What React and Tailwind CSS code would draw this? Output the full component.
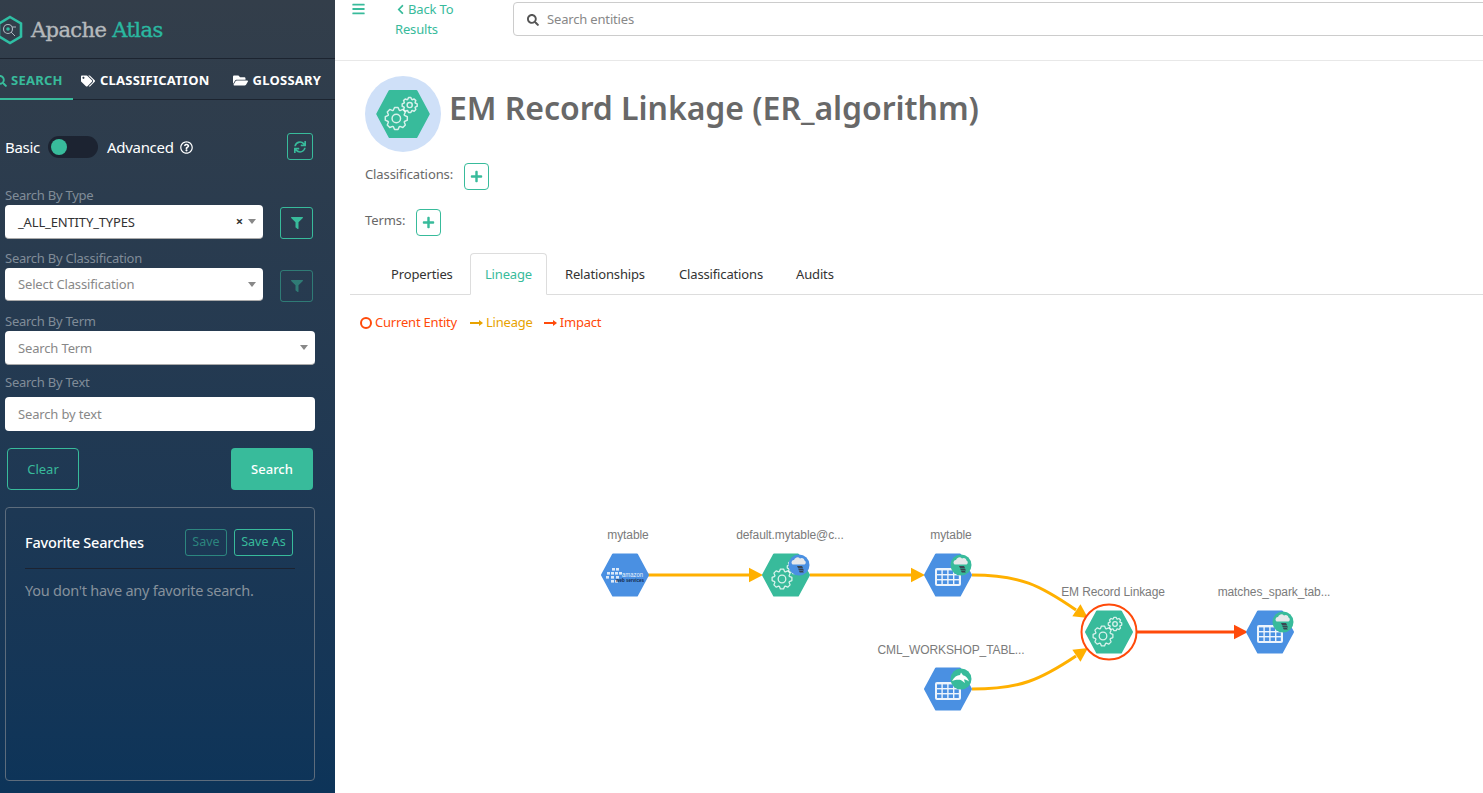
import { FaSearch, FaTags, FaFolderOpen, FaSync, FaFilter, FaPlus, FaChevronLeft, FaBars, FaRegQuestionCircle } from 'react-icons/fa';

// gear outline used inside the process nodes
function gearPath(cx, cy, r, teeth = 8) {
  const pts = [];
  for (let i = 0; i < teeth; i++) {
    const a = (i / teeth) * Math.PI * 2;
    const w = Math.PI / teeth;
    const out = r;
    const inner = r * 0.78;
    pts.push([a - w * 0.9, inner], [a - w * 0.4, out], [a + w * 0.4, out], [a + w * 0.9, inner]);
  }
  return 'M' + pts.map(([a, l]) => `${(cx + Math.cos(a) * l).toFixed(2)} ${(cy + Math.sin(a) * l).toFixed(2)}`).join('L') + 'Z';
}

function hexPoints(cx, cy, w = 23, h = 20.5) {
  const s = w * 0.52;
  return `${cx - w},${cy} ${cx - s},${cy - h} ${cx + s},${cy - h} ${cx + w},${cy} ${cx + s},${cy + h} ${cx - s},${cy + h}`;
}

function Gears({ cx, cy, stroke = 1.3 }) {
  const bx = cx - 6;
  const by = cy + 4;
  const sx = cx + 6;
  const sy = cy - 8;
  return (
    <g fill="none" stroke="#fff" strokeOpacity="0.8" strokeWidth={stroke} strokeLinejoin="round">
      <path d={gearPath(bx, by, 10)} />
      <circle cx={bx} cy={by} r="3.8" />
      <path d={gearPath(sx, sy, 6.8)} />
      <circle cx={sx} cy={sy} r="2.3" />
    </g>
  );
}

function TableIcon({ cx, cy }) {
  const x = cx - 13;
  const y = cy - 8;
  return (
    <g>
      <rect x={x} y={y} width="26" height="18" rx="2" fill="#fff" fillOpacity="0.9" />
      {[0, 1, 2].map((r) =>
        [0, 1, 2, 3].map((c) => (
          <rect key={`${r}-${c}`} x={x + 2 + c * 5.8} y={y + 2.4 + r * 5} width="4.4" height="3.6" fill="#4a90e2" />
        ))
      )}
    </g>
  );
}

function CloudBadge({ cx, cy, fill }) {
  return (
    <g>
      <circle cx={cx} cy={cy} r="10.5" fill={fill} />
      <path
        d={`M${cx - 7} ${cy - 1}a2.5 2.5 0 0 1 2-4a3.5 3.5 0 0 1 6-1.5a3 3 0 0 1 4.5 2a2.2 2.2 0 0 1 0 4h-11a2 2 0 0 1-1.5-.5z`}
        fill="#e6e8ea"
      />
      <path d={`M${cx - 2} ${cy + 1}h5l1 2h-5zM${cx - 1} ${cy + 3.5}h5l1 2h-5zM${cx} ${cy + 6}h4l.8 1.6h-4z`} fill="#3b4652" />
    </g>
  );
}

function WhaleBadge({ cx, cy }) {
  return (
    <g>
      <circle cx={cx} cy={cy} r="10.5" fill="#38bb9b" />
      <path
        d={`M${cx - 9} ${cy + 2}c2-4 5-6 8-6l1-2.5l2 2.8c3 .8 5 3 6 6.2c-2-1.4-3.6-2-5-2l1 3.5c-2-1.5-3.4-2.8-5-3.2c-3-.4-5 0-8 1.2z`}
        fill="#fff"
      />
    </g>
  );
}

function AwsMark({ cx, cy }) {
  const cubes = [[-13, -7], [-9, -7], [-18, -3], [-14, -3], [-10, -3], [-6, -3], [-19, 1], [-14, 1], [-9, 1], [-14, 5], [-10, 5]];
  return (
    <g>
      {cubes.map(([dx, dy], i) => (
        <rect key={i} x={cx + dx} y={cy + dy} width="3" height="2.6" fill="#fff" fillOpacity="0.8" />
      ))}
      <text x={cx - 3} y={cy + 1.5} fontSize="7.5" textLength="21" lengthAdjust="spacingAndGlyphs" fill="#fff" fillOpacity="0.9" fontFamily="Liberation Sans, sans-serif">amazon</text>
      <text x={cx - 9} y={cy + 7} fontSize="5" fontWeight="700" textLength="28" lengthAdjust="spacingAndGlyphs" fill="#13294b" fontFamily="Liberation Sans, sans-serif">web services</text>
    </g>
  );
}

function NodeLabel({ x, y, children }) {
  return (
    <text x={x} y={y} textAnchor="middle" fontSize="12" letterSpacing="-0.1" fill="#7b7b7b" fontFamily="Liberation Sans, sans-serif">
      {children}
    </text>
  );
}

function Arrow({ x, y, angle, color, size = 14 }) {
  return (
    <polygon
      points={`0,0 ${-size},${-size * 0.52} ${-size},${size * 0.52}`}
      fill={color}
      transform={`translate(${x} ${y}) rotate(${angle})`}
    />
  );
}

function LineageGraph() {
  const yellow = '#ffb000';
  const red = '#ff4a0a';
  return (
    <svg viewBox="335 335 1148 458" className="block w-[1148px] h-[458px]">
      {/* edges */}
      <g fill="none" stroke={yellow} strokeWidth="3">
        <path d="M648 575H752" />
        <path d="M810 575H914" />
        <path d="M972 575C1020 575 1040 585 1076 610" />
        <path d="M972 689C1020 689 1040 680 1076 656" />
      </g>
      <Arrow x={763} y={575} angle={0} color={yellow} />
      <Arrow x={925} y={575} angle={0} color={yellow} />
      <Arrow x={1088} y={618} angle={34} color={yellow} />
      <Arrow x={1088} y={648} angle={-34} color={yellow} />
      <path d="M1137 632H1238" stroke={red} strokeWidth="3" fill="none" />
      <Arrow x={1248} y={632} angle={0} color={red} />

      {/* nodes */}
      <polygon points={hexPoints(625, 575)} fill="#4a90e2" stroke="#4a90e2" strokeWidth="2" strokeLinejoin="round" />
      <AwsMark cx={625} cy={575} />

      <polygon points={hexPoints(786, 575)} fill="#38bb9b" stroke="#38bb9b" strokeWidth="2" strokeLinejoin="round" />
      <Gears cx={788} cy={575} />
      <CloudBadge cx={799} cy={565} fill="#4a90e2" />

      <polygon points={hexPoints(948, 575)} fill="#4a90e2" stroke="#4a90e2" strokeWidth="2" strokeLinejoin="round" />
      <TableIcon cx={948} cy={576} />
      <CloudBadge cx={961} cy={565} fill="#38bb9b" />

      <polygon points={hexPoints(948, 689)} fill="#4a90e2" stroke="#4a90e2" strokeWidth="2" strokeLinejoin="round" />
      <TableIcon cx={948} cy={690} />
      <WhaleBadge cx={961} cy={679} />

      <circle cx="1109" cy="632" r="27.5" fill="#fff" stroke={red} strokeWidth="2" />
      <polygon points={hexPoints(1109, 632)} fill="#38bb9b" stroke="#38bb9b" strokeWidth="2" strokeLinejoin="round" />
      <Gears cx={1109} cy={632} />

      <polygon points={hexPoints(1270, 632)} fill="#4a90e2" stroke="#4a90e2" strokeWidth="2" strokeLinejoin="round" />
      <TableIcon cx={1270} cy={633} />
      <CloudBadge cx={1283} cy={622} fill="#38bb9b" />

      <NodeLabel x={628} y={539}>mytable</NodeLabel>
      <NodeLabel x={790} y={539}>default.mytable@c...</NodeLabel>
      <NodeLabel x={951} y={539}>mytable</NodeLabel>
      <NodeLabel x={1113} y={596}>EM Record Linkage</NodeLabel>
      <NodeLabel x={1274} y={596}>matches_spark_tab...</NodeLabel>
      <NodeLabel x={951} y={654}>CML_WORKSHOP_TABL...</NodeLabel>
    </svg>
  );
}

function Caret() {
  return <span className="inline-block w-0 h-0 border-x-[4px] border-x-transparent border-t-[5px] border-t-[#888]" />;
}

function LegendArrow({ color }) {
  return (
    <svg viewBox="0 0 13 8" className="w-[13px] h-[8px] mr-[3px]">
      <path d="M0 4H10" stroke={color} strokeWidth="2" />
      <path d="M9 1L13 4L9 7Z" fill={color} />
    </svg>
  );
}

function Sidebar() {
  const label = 'h-[20px] text-[13px] leading-[20px] tracking-[-0.25px] text-[#808c98]';
  const field = 'rounded-[4px] bg-white flex items-center pl-[13px] pr-[7px] text-[13px] tracking-[-0.15px]';
  return (
    <aside className="w-[335px] h-full shrink-0 bg-linear-to-b from-[#333e4a] to-[#0d3459] text-white overflow-hidden">
      <div className="h-[59px] flex items-center border-b border-[#1c2430] pt-[2px]">
        <svg viewBox="0 0 28 30" className="w-[28px] h-[30px] -ml-[4px] shrink-0">
          <polygon points="14,2 25,8.5 25,21.5 14,28 3,21.5 3,8.5" fill="none" stroke="#2fbfa4" strokeWidth="2.6" />
          <circle cx="12" cy="14" r="4.5" fill="none" stroke="#aeb8c0" strokeWidth="1.2" />
          <circle cx="12" cy="14" r="1.8" fill="#2fbfa4" />
          <path d="M15 17l4 4M16 12h4" stroke="#aeb8c0" strokeWidth="1" />
        </svg>
        <span className="ml-[7px] text-[21px] leading-none font-['DejaVu_Serif',serif] tracking-[-0.6px] text-[#b5b9bc] [-webkit-text-stroke:0.4px_currentColor]">
          Apache <span className="text-[#2ab8a0]">Atlas</span>
        </span>
      </div>

      <div className="h-[41px] flex items-stretch border-b border-[#1c2430] text-[13px] font-bold tracking-[0.25px]">
        <div className="w-[73px] flex items-center gap-[4px] pt-[5px] border-b-[2px] border-[#38bb9b] text-[#38bb9b] -mb-px">
          <FaSearch className="text-[12px] -ml-[5px] shrink-0" />
          <span>SEARCH</span>
        </div>
        <div className="ml-[8px] flex items-center gap-[5px] pt-[3px]">
          <FaTags className="text-[14px]" />
          <span>CLASSIFICATION</span>
        </div>
        <div className="ml-[23px] flex items-center gap-[5px] pt-[3px]">
          <FaFolderOpen className="text-[15px]" />
          <span>GLOSSARY</span>
        </div>
      </div>

      <div className="pl-[5px] pr-[20px]">
        <div className="mt-[33px] h-[27px] flex items-center text-[15px] tracking-[-0.3px]">
          <span className="mt-[1px] w-[35px]">Basic</span>
          <span className="ml-[8px] w-[50px] h-[22px] rounded-full bg-[#1c2331] flex items-center pl-[3px]">
            <span className="w-[16px] h-[16px] rounded-full bg-[#38bb9b]" />
          </span>
          <span className="ml-[9px] mt-[1px]">Advanced</span>
          <FaRegQuestionCircle className="ml-[6px] mt-[1px] text-[13px]" />
          <button className="ml-auto mr-[2px] w-[26px] h-[27px] rounded-[3px] border border-[#38bb9b] flex items-center justify-center text-[#38bb9b]">
            <FaSync className="text-[12px]" />
          </button>
        </div>

        <p className={`mt-[25px] ${label}`}>Search By Type</p>
        <div className="flex items-start h-[34px]">
          <div className={`w-[258px] h-[34px] border-b border-[#aaa] text-[#333] ${field}`}>
            <span className="mt-[2px]">_ALL_ENTITY_TYPES</span>
            <span className="ml-auto mr-[5px] text-[13px] font-bold leading-none text-[#333]">×</span>
            <Caret />
          </div>
          <button className="ml-[17px] w-[33px] h-[32px] mt-[2px] rounded-[3px] border border-[#38bb9b] flex items-center justify-center text-[#38bb9b]">
            <FaFilter className="text-[12px]" />
          </button>
        </div>

        <p className={`mt-[9px] ${label}`}>Search By Classification</p>
        <div className="flex items-start h-[33px]">
          <div className={`w-[258px] h-[33px] border-b border-[#aaa] justify-between text-[#888] ${field}`}>
            <span className="mt-[2px]">Select Classification</span>
            <Caret />
          </div>
          <button className="ml-[17px] w-[33px] h-[32px] mt-[2px] rounded-[3px] border border-[#38bb9b]/50 flex items-center justify-center text-[#38bb9b]/50">
            <FaFilter className="text-[12px]" />
          </button>
        </div>

        <p className={`mt-[10px] ${label}`}>Search By Term</p>
        <div className={`w-[310px] h-[34px] border-b border-[#aaa] justify-between text-[#888] ${field}`}>
          <span className="mt-[2px]">Search Term</span>
          <Caret />
        </div>

        <p className={`mt-[7px] ${label}`}>Search By Text</p>
        <div className={`mt-[5px] w-[310px] h-[34px] text-[#888] ${field}`}>
          <span className="mt-[2px]">Search by text</span>
        </div>

        <div className="mt-[17px] ml-[2px] w-[306px] flex justify-between text-[13px]">
          <button className="w-[72px] h-[42px] pt-[2px] rounded-[4px] border border-[#38bb9b] text-[#38bb9b]">Clear</button>
          <button className="w-[82px] h-[42px] pt-[2px] rounded-[4px] bg-[#38bb9b] text-white font-medium">Search</button>
        </div>

        <div className="mt-[17px] w-[310px] h-[274px] rounded-[4px] border border-[#5d6c7c] px-[19px] pt-[21px]">
          <div className="flex items-center justify-between pb-[12px] border-b border-[#1c2331]">
            <h3 className="text-[14.5px] font-medium tracking-[-0.2px]">Favorite Searches</h3>
            <div className="flex gap-[7px] mr-[2px] text-[12.5px] text-[#38bb9b]">
              <button className="w-[42px] h-[27px] rounded-[3px] border border-[#38bb9b]/60 text-[#38bb9b]/60">Save</button>
              <button className="w-[59px] h-[27px] rounded-[3px] border border-[#38bb9b]">Save As</button>
            </div>
          </div>
          <p className="mt-[11px] text-[14.5px] tracking-[-0.25px] text-[#86919c]">You don't have any favorite search.</p>
        </div>
      </div>
    </aside>
  );
}

export default function App() {
  return (
    <div className="w-[1483px] h-[793px] flex overflow-hidden bg-white font-['Noto_Sans',sans-serif]">
      <Sidebar />
      <main className="flex-1 min-w-0 flex flex-col">
        <header className="h-[61px] shrink-0 flex items-start border-b border-[#e8e8e8]">
          <FaBars className="ml-[17px] mt-[2px] w-[13px] shrink-0 text-[14px] text-[#38bb9b]" />
          <a className="ml-[30px] -mt-px w-[118px] shrink-0 text-[13px] tracking-[-0.15px] leading-[20px] text-[#38bb9b]">
            <span className="block whitespace-nowrap">
              <FaChevronLeft className="inline text-[11px] mb-[3px] mr-[2px]" />Back To
            </span>
            <span className="block">Results</span>
          </a>
          <div className="mt-[2px] w-[1000px] h-[34px] shrink-0 rounded-[4px] border border-[#ccc] flex items-center pl-[13px] pt-[2px] text-[13px] tracking-[-0.17px] text-[#888]">
            <FaSearch className="text-[12px] text-[#555] mr-[8px]" />
            Search entities
          </div>
        </header>

        <section className="pl-[30px]">
          <div className="mt-[15px] flex items-center h-[76px]">
            <div className="w-[76px] h-[76px] rounded-full bg-[#cfe0f8] flex items-center justify-center shrink-0">
              <svg viewBox="1083 609 52 46" className="w-[58px] h-[52px]">
                <polygon points={hexPoints(1109, 632)} fill="#38bb9b" stroke="#38bb9b" strokeWidth="2" strokeLinejoin="round" />
                <Gears cx={1109} cy={632} />
              </svg>
            </div>
            <h1 className="ml-[8px] -mt-[13px] text-[32px] font-semibold leading-none tracking-[-0.05px] whitespace-nowrap text-[#686868]">
              EM Record Linkage (ER_algorithm)
            </h1>
          </div>

          <div className="mt-[11px] h-[27px] flex items-center text-[13px] tracking-[-0.1px] text-[#686868]">
            <span className="-mt-[3px]">Classifications:</span>
            <button className="ml-[11px] w-[25px] h-[27px] rounded-[4px] border border-[#38bb9b] flex items-center justify-center text-[#38bb9b]">
              <FaPlus className="text-[13px]" />
            </button>
          </div>
          <div className="mt-[19px] h-[27px] flex items-center text-[13px] tracking-[-0.1px] text-[#686868]">
            <span className="-mt-[3px]">Terms:</span>
            <button className="ml-[11px] w-[25px] h-[27px] rounded-[4px] border border-[#38bb9b] flex items-center justify-center text-[#38bb9b]">
              <FaPlus className="text-[13px]" />
            </button>
          </div>
        </section>

        <nav className="mt-[17px] ml-[15px] h-[42px] flex items-stretch border-b border-[#ddd] text-[13px] tracking-[-0.15px] text-[#333]">
          <span className="ml-[41px] w-[61px] pt-[2px] flex items-center whitespace-nowrap">Properties</span>
          <span className="ml-[18px] w-[77px] pt-[2px] -mb-px flex items-center justify-center rounded-t-[4px] border border-b-white border-[#ddd] bg-white text-[#38bb9b]">Lineage</span>
          <span className="ml-[18px] w-[114px] pt-[2px] flex items-center">Relationships</span>
          <span className="w-[117px] pt-[2px] flex items-center">Classifications</span>
          <span className="pt-[2px] flex items-center">Audits</span>
        </nav>

        <div className="mt-[18px] mb-[2px] ml-[25px] h-[20px] flex items-center text-[13px] tracking-[-0.2px] text-[#ff4a0a]">
          <span className="w-[12px] h-[12px] rounded-full border-2 border-[#ff4a0a] mr-[3px]" />
          <span>Current Entity</span>
          <span className="ml-[13px] text-[#e8a200] flex items-center">
            <LegendArrow color="#e8a200" />Lineage
          </span>
          <span className="ml-[11px] flex items-center">
            <LegendArrow color="#ff4a0a" />Impact
          </span>
        </div>

        <LineageGraph />
      </main>
    </div>
  );
}
